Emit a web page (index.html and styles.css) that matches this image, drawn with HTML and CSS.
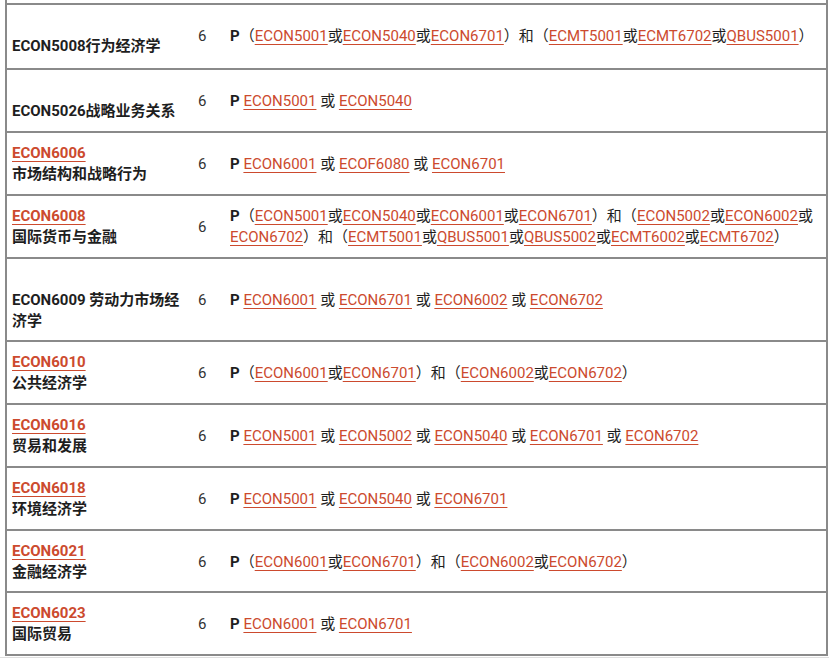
FILE: index.html
```html
<!DOCTYPE html>
<html lang="zh">
<head>
<meta charset="utf-8">
<title>ECON units</title>
<link rel="stylesheet" href="styles.css">
</head>
<body>
<div class="page">
<table class="units">
<colgroup><col class="c-name"><col class="c-cp"><col class="c-req"></colgroup>
<tr class="cut"><td colspan="3"></td></tr>
<tr class="tall">
<td class="name">&nbsp;<br>ECON5008行为经济学</td>
<td class="cp">6</td>
<td class="req"><b>P</b>（<a href="#">ECON5001</a>或<a href="#">ECON5040</a>或<a href="#">ECON6701</a>）和（<a href="#">ECMT5001</a>或<a href="#">ECMT6702</a>或<a href="#">QBUS5001</a>）</td>
</tr>
<tr>
<td class="name">&nbsp;<br>ECON5026战略业务关系</td>
<td class="cp">6</td>
<td class="req"><b>P</b> <a href="#">ECON5001</a> 或 <a href="#">ECON5040</a></td>
</tr>
<tr>
<td class="name"><a href="#">ECON6006</a><br>市场结构和战略行为</td>
<td class="cp">6</td>
<td class="req"><b>P</b> <a href="#">ECON6001</a> 或 <a href="#">ECOF6080</a> 或 <a href="#">ECON6701</a></td>
</tr>
<tr>
<td class="name"><a href="#">ECON6008</a><br>国际货币与金融</td>
<td class="cp">6</td>
<td class="req"><b>P</b>（<a href="#">ECON5001</a>或<a href="#">ECON5040</a>或<a href="#">ECON6001</a>或<a href="#">ECON6701</a>）和（<a href="#">ECON5002</a>或<a href="#">ECON6002</a>或<a href="#">ECON6702</a>）和（<a href="#">ECMT5001</a>或<a href="#">QBUS5001</a>或<a href="#">QBUS5002</a>或<a href="#">ECMT6002</a>或<a href="#">ECMT6702</a>）</td>
</tr>
<tr class="short">
<td class="name">&nbsp;<br>ECON6009 劳动力市场经济学</td>
<td class="cp">6</td>
<td class="req"><b>P</b> <a href="#">ECON6001</a> 或 <a href="#">ECON6701</a> 或 <a href="#">ECON6002</a> 或 <a href="#">ECON6702</a></td>
</tr>
<tr>
<td class="name"><a href="#">ECON6010</a><br>公共经济学</td>
<td class="cp">6</td>
<td class="req"><b>P</b>（<a href="#">ECON6001</a>或<a href="#">ECON6701</a>）和（<a href="#">ECON6002</a>或<a href="#">ECON6702</a>）</td>
</tr>
<tr>
<td class="name"><a href="#">ECON6016</a><br>贸易和发展</td>
<td class="cp">6</td>
<td class="req"><b>P</b> <a href="#">ECON5001</a> 或 <a href="#">ECON5002</a> 或 <a href="#">ECON5040</a> 或 <a href="#">ECON6701</a> 或 <a href="#">ECON6702</a></td>
</tr>
<tr>
<td class="name"><a href="#">ECON6018</a><br>环境经济学</td>
<td class="cp">6</td>
<td class="req"><b>P</b> <a href="#">ECON5001</a> 或 <a href="#">ECON5040</a> 或 <a href="#">ECON6701</a></td>
</tr>
<tr class="short">
<td class="name"><a href="#">ECON6021</a><br>金融经济学</td>
<td class="cp">6</td>
<td class="req"><b>P</b>（<a href="#">ECON6001</a>或<a href="#">ECON6701</a>）和（<a href="#">ECON6002</a>或<a href="#">ECON6702</a>）</td>
</tr>
<tr>
<td class="name"><a href="#">ECON6023</a><br>国际贸易</td>
<td class="cp">6</td>
<td class="req"><b>P</b> <a href="#">ECON6001</a> 或 <a href="#">ECON6701</a></td>
</tr>
</table>
<div class="scrollbar"></div>
</div>
</body>
</html>
```

FILE: styles.css
```css
html, body {
  margin: 0;
  padding: 0;
  background: #ffffff;
}

.page {
  width: 831px;
  height: 658px;
  overflow: hidden;
  font-family: "Roboto", "Noto Sans CJK SC", sans-serif;
  font-size: 15px;
  line-height: 21px;
  color: #1e1e1e;
}

.units {
  margin-left: 5px;
  width: 823px;
  border-collapse: collapse;
  table-layout: fixed;
  border-left: 2px solid #8a8a8a;
  border-right: 2px solid #8a8a8a;
}

.c-name { width: 187px; }
.c-cp { width: 32px; }

.units td {
  padding: 10px 5px 9px;
  vertical-align: middle;
  border-bottom: 2px solid #8a8a8a;
}

.units tr.tall td {
  padding-bottom: 11px;
}

.units tr.short td {
  padding-bottom: 8px;
}

.units tr.cut td {
  height: 3px;
  padding: 0;
}

.name {
  font-weight: 700;
}

.cp {
  color: #333333;
}

.req b {
  font-weight: 700;
}

.units a {
  color: #cc4a2e;
  text-decoration: underline;
  text-decoration-thickness: 1px;
  text-underline-offset: 3px;
}

.scrollbar {
  height: 4px;
  width: 829px;
  background: #dedede;
  margin-top: 1px;
}
```
